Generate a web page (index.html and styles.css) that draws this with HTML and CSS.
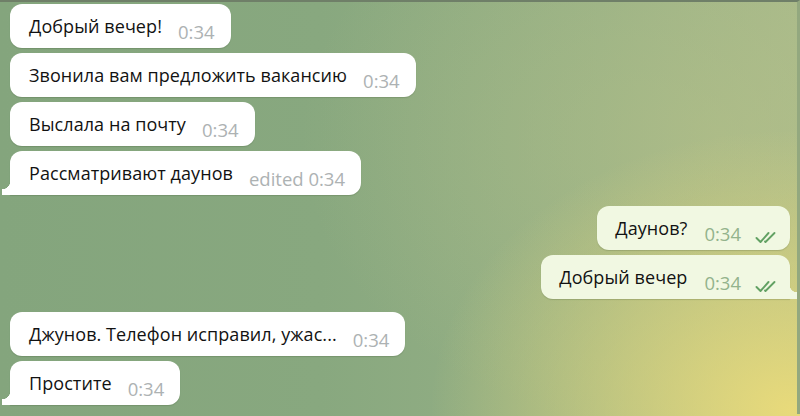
FILE: index.html
```html
<!DOCTYPE html>
<html lang="ru">
<head>
<meta charset="utf-8">
<link rel="stylesheet" href="styles.css">
</head>
<body>
<div class="chat">
  <div class="group in">
    <div class="msg"><span class="text">Добрый вечер!</span><span class="time">0:34</span></div>
    <div class="msg"><span class="text">Звонила вам предложить вакансию</span><span class="time">0:34</span></div>
    <div class="msg"><span class="text">Выслала на почту</span><span class="time">0:34</span></div>
    <div class="msg last"><span class="text">Рассматривают даунов</span><span class="time">edited 0:34</span></div>
  </div>
  <div class="group out">
    <div class="msg"><span class="text">Даунов?</span><span class="time">0:34</span><svg class="ticks" viewBox="0 0 24 14"><path d="M1.5 8 L5.5 12 L13.5 3" /><path d="M10 11.5 L10.5 12 L19.5 3" /></svg></div>
    <div class="msg last"><span class="text">Добрый вечер</span><span class="time">0:34</span><svg class="ticks" viewBox="0 0 24 14"><path d="M1.5 8 L5.5 12 L13.5 3" /><path d="M10 11.5 L10.5 12 L19.5 3" /></svg></div>
  </div>
  <div class="group in">
    <div class="msg"><span class="text">Джунов. Телефон исправил, ужас...</span><span class="time">0:34</span></div>
    <div class="msg last"><span class="text">Простите</span><span class="time">0:34</span></div>
  </div>
</div>
</body>
</html>
```

FILE: styles.css
```css
html, body {
  margin: 0;
  padding: 0;
}
body {
  width: 800px;
  height: 416px;
  overflow: hidden;
  font-family: "Open Sans", "Noto Sans", sans-serif;
  background:
    radial-gradient(ellipse 360px 280px at 790px 410px, rgba(234, 219, 122, 0.97), rgba(234, 219, 122, 0) 100%),
    radial-gradient(ellipse 420px 300px at 720px 140px, rgba(186, 194, 135, 0.5), rgba(186, 194, 135, 0) 100%),
    linear-gradient(90deg, #84a57d 0%, #88a87f 40%, #97b186 75%, #a6b98b 100%);
}
.chat {
  border-top: 2px solid #6f7f68;
  border-right: 3px solid #93a87f;
  height: 414px;
  box-sizing: border-box;
  padding: 2px 7px 0 10px;
  display: flex;
  flex-direction: column;
}
.group {
  display: flex;
  flex-direction: column;
  gap: 5px;
}
.group.in {
  align-items: flex-start;
}
.group.out {
  align-items: flex-end;
  margin-top: 11px;
  margin-bottom: 13px;
}
.msg {
  position: relative;
  display: flex;
  align-items: flex-start;
  height: 44px;
  box-sizing: border-box;
  padding: 10px 16px 0 19px;
  border-radius: 12px;
  background: #ffffff;
  color: #121212;
  font-size: 18px;
  line-height: 24px;
  letter-spacing: 0.07px;
  box-shadow: 0 1px 1px rgba(40, 60, 30, 0.18);
}
.out .msg {
  background: #f1f8e2;
  padding-right: 11px;
  padding-left: 18px;
}
.time {
  margin-left: 16px;
  padding-top: 6px;
  font-size: 18.5px;
  line-height: 24px;
  letter-spacing: 0;
  color: #adb2b3;
}
.out .time {
  color: #93b38c;
  margin-left: 17px;
}
.ticks {
  width: 24px;
  height: 14px;
  margin: 14px 0 0 14px;
  fill: none;
  stroke: #62a163;
  stroke-width: 1.9;
  stroke-linecap: round;
  stroke-linejoin: round;
}
.in .msg.last {
  border-bottom-left-radius: 0;
}
.in .msg.last::before {
  content: "";
  position: absolute;
  left: -8px;
  bottom: 0;
  width: 8px;
  height: 14px;
  background: radial-gradient(circle at 0 0, transparent 8px, #ffffff 8.5px);
}
.out .msg.last {
  border-bottom-right-radius: 0;
}
.out .msg.last::after {
  content: "";
  position: absolute;
  right: -7px;
  bottom: 0;
  width: 7px;
  height: 14px;
  background: radial-gradient(circle at 100% 0, transparent 7px, #f1f8e2 7.5px);
}
```
